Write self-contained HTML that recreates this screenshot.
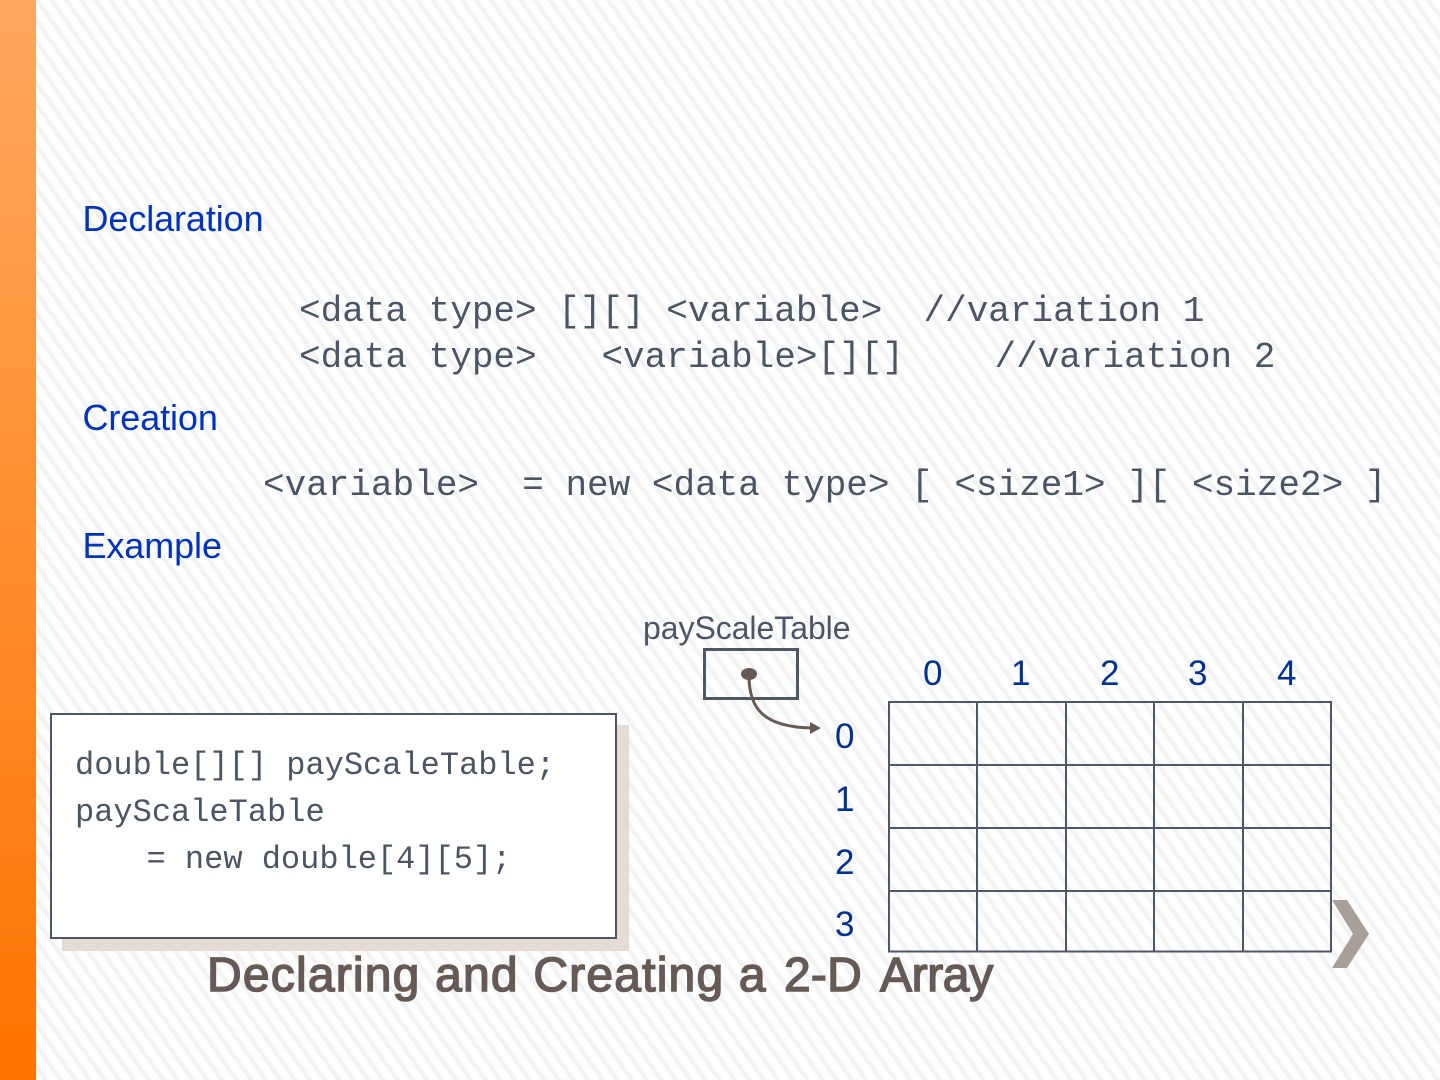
<!DOCTYPE html>
<html><head><meta charset="utf-8"><style>
html,body{margin:0;padding:0}
body{width:1440px;height:1080px;position:relative;overflow:hidden;background:#fff}
#bg{position:absolute;left:36px;top:0;width:1404px;height:1080px;background:repeating-linear-gradient(55deg,#fff 0,#fff 5px,#f1f2f4 7px,#f1f2f4 9px,#fff 12px)}
#bar{position:absolute;left:0;top:0;width:36px;height:1080px;background:linear-gradient(180deg,#ffa860 0%,#ff7400 100%)}
.t{position:absolute;white-space:pre;line-height:1}
.s{font-family:"Liberation Sans",sans-serif}
.m{font-family:"Liberation Mono",monospace;color:#4c5564}
.h{font-size:36px;color:#0033bb;left:82.500px;letter-spacing:-0.1px}
.c{font-size:36px}
.b{font-size:32px}
.n{font-size:35px;color:#003090}
.ti{font-size:48px;color:#655a55;-webkit-text-stroke:1.500px #655a55;top:952px}
#box{position:absolute;left:50px;top:713px;width:563px;height:222px;background:#fff;border:2px solid #4f5664;box-shadow:12px 12px 0 #e3dcd6}
</style></head><body>
<div id="bg"></div><div id="bar"></div>
<div class="t s h" style="top:201px">Declaration</div>
<div class="t m c" style="left:299px;top:294px">&lt;data type&gt; [][] &lt;variable&gt;</div>
<div class="t m c" style="left:923.500px;top:294px">//variation 1</div>
<div class="t m c" style="left:299px;top:340px">&lt;data type&gt;   &lt;variable&gt;[][]</div>
<div class="t m c" style="left:994.500px;top:340px">//variation 2</div>
<div class="t s h" style="top:400px">Creation</div>
<div class="t m c" style="left:263px;top:468px">&lt;variable&gt;  = new &lt;data type&gt; [ &lt;size1&gt; ][ &lt;size2&gt; ]</div>
<div class="t s h" style="top:528px">Example</div>
<div id="box"></div>
<div class="t m b" style="left:75px;top:750px">double[][] payScaleTable;</div>
<div class="t m b" style="left:75px;top:797px">payScaleTable</div>
<div class="t m b" style="left:146.500px;top:844px">= new double[4][5];</div>
<div class="t s" style="left:643px;top:612px;font-size:32px;letter-spacing:-0.05px;color:#4c5564">payScaleTable</div>
<svg style="position:absolute;left:0;top:0" width="1440" height="1080">
<g fill="none" stroke="#4f5664" stroke-width="2">
<rect x="704.500" y="649.500" width="93" height="49" stroke-width="3"/>
<path d="M889 702H1331V951.500H889ZM977 702V951.500M1066 702V951.500M1154 702V951.500M1243 702V951.500M889 765H1331M889 828H1331M889 891H1331"/>
</g>
<ellipse cx="749" cy="674" rx="8" ry="6" fill="#655a55"/>
<path d="M749 676C749 710 765 727 812 728" fill="none" stroke="#655a55" stroke-width="3"/>
<path d="M810 722L821 728L810 734Z" fill="#655a55"/>
<path d="M1332 900H1347L1369 934L1347 968H1332L1353 934Z" fill="#a89f99"/>
</svg>
<div class="t s n" style="left:923px;top:656px">0</div>
<div class="t s n" style="left:1011px;top:656px">1</div>
<div class="t s n" style="left:1100px;top:656px">2</div>
<div class="t s n" style="left:1188px;top:656px">3</div>
<div class="t s n" style="left:1277px;top:656px">4</div>
<div class="t s n" style="left:835px;top:719px">0</div>
<div class="t s n" style="left:835px;top:782px">1</div>
<div class="t s n" style="left:835px;top:845px">2</div>
<div class="t s n" style="left:835px;top:907px">3</div>
<div class="t s ti" style="left:207px;letter-spacing:1.200px">Declaring and Creating a</div>
<div class="t s ti" style="left:784px;letter-spacing:0.200px">2-D</div>
<div class="t s ti" style="left:880px;letter-spacing:-0.400px">Array</div>
</body></html>
